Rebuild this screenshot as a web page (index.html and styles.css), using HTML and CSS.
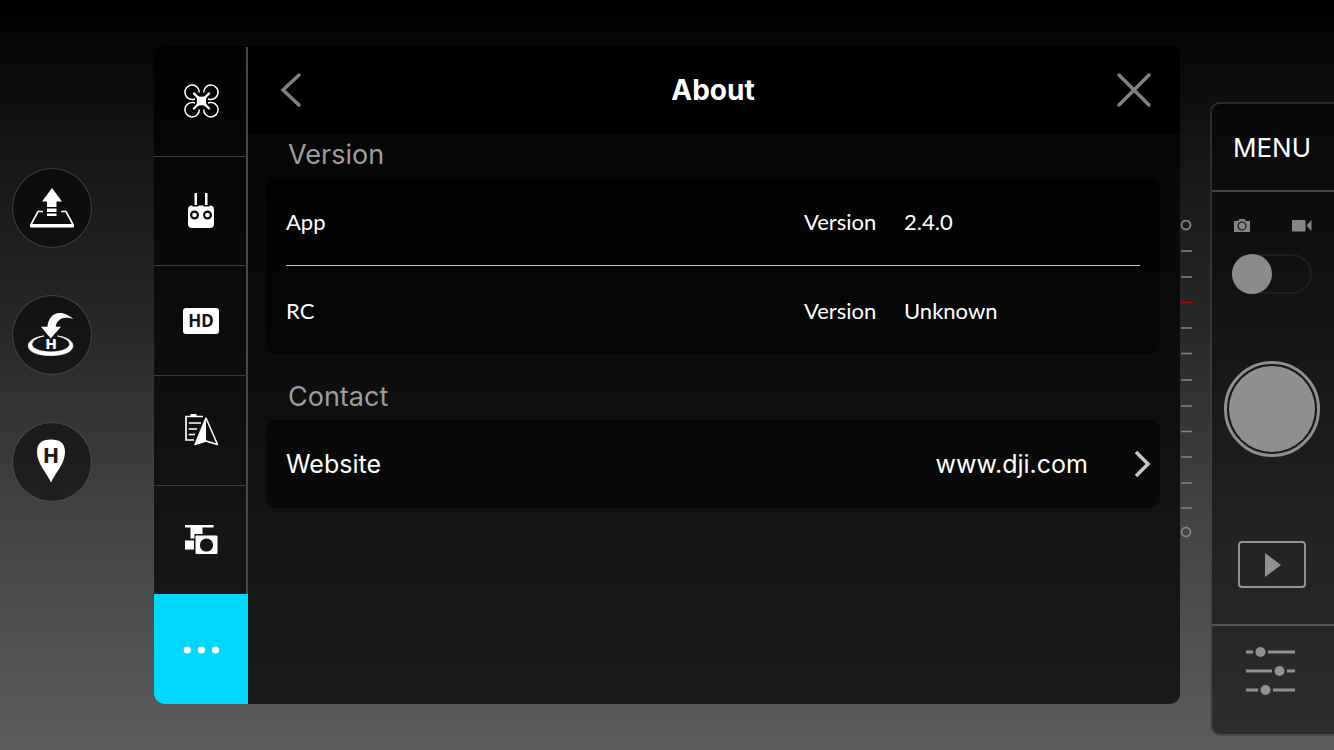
FILE: index.html
```html
<!DOCTYPE html>
<html lang="en">
<head>
    <meta charset="utf-8">
    <title>About</title>
    <link rel="stylesheet" href="styles.css">
</head>
<body>
    <div class="screen">
        <div class="flight-actions">
            <button class="round-button" aria-label="Take off">
                <svg width="78" height="78" viewBox="1 1 78 78">
                    <path d="M40 20L50 33.5H44.500V39H35V33.500H30Z" fill="#fff"/>
                    <path d="M35 40.500h9.500v3.500h-9.500zM35 45.500h9.500v2.500h-9.500z" fill="#fff"/>
                    <path d="M31 43.500H26L19 56.500M49 43.500H54L61 56.500" fill="none" stroke="#fff" stroke-width="1.600"/>
                    <path d="M18 56H62V58.500Q62 59.500 61 59.500H19Q18 59.500 18 58.500Z" fill="#fff"/>
                </svg>
            </button>
            <button class="round-button" aria-label="Return to home">
                <svg width="78" height="78" viewBox="1 1 78 78">
                    <path d="M29 31.700H35.500C36 22 45 11 61.500 24C52 20.500 44.500 24 43.700 31.700H49L38.700 43.500Z" fill="#fff"/>
                    <path d="M32 41C11 43 9 60.500 39 60.500C68 60.500 66 43 45.500 41C64 45 61 56.500 39 57C16 56.500 14 45 32 41Z" fill="#fff" stroke="#fff" stroke-width="0.800"/>
                    <text class="pad-letter" x="39" y="54" text-anchor="middle">H</text>
                </svg>
            </button>
            <button class="round-button" aria-label="Home point">
                <svg width="78" height="78" viewBox="1 1 78 78">
                    <path d="M39 60.500C35 51 25 42 25 30C25 21 30 17.500 39 17.500S53 21 53 30C53 42 43 51 39 60.500Z" fill="#fff"/>
                    <text class="pin-letter" x="39" y="41" text-anchor="middle">H</text>
                </svg>
            </button>
        </div>

        <main class="dialog">
            <nav class="tabs">
                <button class="tab" aria-label="Aircraft">
                    <svg width="40" height="40" viewBox="0 0 40 40">
                        <g fill="none" stroke="#fff" stroke-width="1.500">
                            <path d="M18.300 11.500A7.200 7.200 0 1 0 12 18.400L14 18"/>
                            <path d="M22.700 11.500A7.200 7.200 0 1 1 29 18.400L27 18"/>
                            <path d="M18.300 28.500A7.200 7.200 0 1 1 12 21.600L14 22"/>
                            <path d="M22.700 28.500A7.200 7.200 0 1 0 29 21.600L27 22"/>
                            <path d="M13 12.500L28 27.500M28 12.500L13 27.500" stroke-width="2.400" stroke-linecap="round"/>
                        </g>
                        <path d="M15 14.500Q20.500 17 26 14.500Q24 20 26 25.500Q20.500 23 15 25.500Q17 20 15 14.500Z" fill="#fff"/>
                    </svg>
                </button>
                <button class="tab" aria-label="Remote controller">
                    <svg width="40" height="40" viewBox="0 0 40 40">
                        <path d="M13.500 2h2.500v12h-2.500zM24 2h2.500v12h-2.500z" fill="#fff"/>
                        <rect x="7" y="14.500" width="26" height="22.500" rx="4" fill="#fff"/>
                        <path d="M11.500 14h6v1.500h-6zM22.500 14h6v1.500h-6z" fill="#070707"/>
                        <circle cx="13.500" cy="24" r="3.400" fill="#fff" stroke="#0b0b0b" stroke-width="2.200"/>
                        <circle cx="26.500" cy="24" r="3.400" fill="#fff" stroke="#0b0b0b" stroke-width="2.200"/>
                    </svg>
                </button>
                <button class="tab" aria-label="HD transmission">
                    <span class="hd">HD</span>
                </button>
                <button class="tab" aria-label="Checklist">
                    <svg width="40" height="40" viewBox="0 0 40 40">
                        <path d="M22 6.500H5V30H13M7.700 13H20M7.700 19H16M7.700 24.500H14" fill="none" stroke="#fff" stroke-width="1.700"/>
                        <path d="M9.500 4h6v3h-6z" fill="#fff"/>
                        <path d="M25 8L14 34.500L25 31Z" fill="#fff"/>
                        <path d="M25 8L36.500 34.500L25 31L14 34.500Z" fill="none" stroke="#fff" stroke-width="1.500" stroke-linejoin="round"/>
                    </svg>
                </button>
                <button class="tab" aria-label="Gimbal">
                    <svg width="40" height="40" viewBox="0 0 40 40">
                        <path d="M4 5h28.500v2.500H21.500V14H13.500V18.500H9.500V7.500H4zM4 20.500h9v9H4z" fill="#fff"/>
                        <rect x="14.500" y="15.500" width="22" height="18.500" rx="1" fill="#fff"/>
                        <circle cx="25.500" cy="25" r="6.600" fill="#161616"/>
                    </svg>
                </button>
                <button class="tab active" aria-label="General">
                    <svg width="40" height="40" viewBox="0 0 40 40" fill="#fff">
                        <circle cx="6.300" cy="20" r="3.600"/>
                        <circle cx="20.500" cy="20" r="3.600"/>
                        <circle cx="34.500" cy="20" r="3.600"/>
                    </svg>
                </button>
            </nav>

            <div class="content">
                <header class="title-bar">
                    <button class="icon-button" aria-label="Back">
                        <svg width="40" height="40" viewBox="0 0 40 40"><path d="M23 5L7 20L23 35" fill="none" stroke="#808080" stroke-width="3.500" stroke-linecap="round"/></svg>
                    </button>
                    <h1>About</h1>
                    <button class="icon-button" aria-label="Close">
                        <svg width="40" height="40" viewBox="0 0 40 40"><path d="M5 5L35 35M35 5L5 35" fill="none" stroke="#808080" stroke-width="3.500" stroke-linecap="round"/></svg>
                    </button>
                </header>

                <section class="group">
                    <h2>Version</h2>
                    <div class="card">
                        <table class="versions">
                            <tr>
                                <th scope="row">App</th>
                                <td class="label">Version</td>
                                <td class="value">2.4.0</td>
                            </tr>
                            <tr>
                                <th scope="row">RC</th>
                                <td class="label">Version</td>
                                <td class="value">Unknown</td>
                            </tr>
                        </table>
                    </div>
                </section>

                <section class="group contact">
                    <h2>Contact</h2>
                    <a class="card link-row" href="#">
                        <span>Website</span>
                        <span class="url">www.dji.com</span>
                        <svg width="18" height="28" viewBox="0 0 18 28"><path d="M2 2L14 14L2 26" fill="none" stroke="#c8c8cc" stroke-width="3.500"/></svg>
                    </a>
                </section>
            </div>
        </main>

        <aside class="camera">
            <!-- gimbal pitch scale -->
            <svg class="scale" width="14" height="318" viewBox="0 0 14 318" fill="none" stroke="#858585" stroke-width="1.500">
                <circle cx="6" cy="5" r="4.500" stroke-width="1.800"/>
                <path d="M1 31H12M1 57H12M1 108H12M1 133.500H12M1 160H12M1 186H12M1 211.500H12M1 237H12M1 263H12M1 288H12"/>
                <path d="M0 82.500H13" stroke="#a30d0d"/>
                <circle cx="6" cy="312" r="4.500" stroke-width="1.800"/>
            </svg>

            <div class="camera-panel">
                <button class="menu-button">MENU</button>
                <div class="capture">
                    <label class="mode-icons" for="mode">
                        <svg width="20" height="16" viewBox="0 0 20 16" role="img" aria-label="Photo">
                            <path d="M2 3H6L7.500 1H12.500L14 3H18V14H2Z" fill="#858585"/>
                            <circle cx="10" cy="8" r="4" fill="#858585" stroke="#111" stroke-width="1.200"/>
                        </svg>
                        <svg width="20" height="16" viewBox="0 0 20 16" role="img" aria-label="Video">
                            <rect y="2" width="13.500" height="11.500" rx="1" fill="#858585"/>
                            <path d="M14.500 7.500L19.500 2V13Z" fill="#858585"/>
                        </svg>
                    </label>
                    <input type="checkbox" class="mode-switch" id="mode">
                    <button class="shutter" aria-label="Take photo"></button>
                    <button class="playback" aria-label="Playback">
                        <svg width="18" height="24" viewBox="0 0 18 24"><path d="M2 0L18 12L2 24Z" fill="#919191"/></svg>
                    </button>
                </div>
                <button class="camera-settings" aria-label="Camera settings">
                    <svg width="50" height="50" viewBox="0 0 50 50" fill="#919191" stroke="#919191" stroke-width="2.800">
                        <path d="M1 6H8M23 6H50M1 25H27M42 25H50M1 44H13M28 44H50"/>
                        <g stroke="none">
                            <circle cx="15.500" cy="6" r="5"/>
                            <circle cx="34.500" cy="25" r="5"/>
                            <circle cx="20.500" cy="44" r="5"/>
                        </g>
                    </svg>
                </button>
            </div>
        </aside>
    </div>
</body>
</html>
```
FILE: styles.css
```css
* {
    box-sizing: border-box;
}
body {
    margin: 0;
    font-family: Inter, "Liberation Sans", sans-serif;
    color: white;
    background-color: black;
}
button {
    padding: 0;
    border: none;
    background: none;
    color: inherit;
    font-family: inherit;
    cursor: pointer;
}
svg {
    display: block;
}
.screen {
    display: grid;
    grid-template-columns: 154px 1fr 154px;
    min-height: 100vh;
    background: linear-gradient(#000 0%, #151515 20%, #272727 43%, #404141 67%, #5d5d5d 100%);
}

/* left side buttons */
.flight-actions {
    display: flex;
    flex-direction: column;
    gap: 47px;
    padding: 168px 0 0 12px;
}
.round-button {
    width: 80px;
    height: 80px;
    border: 1px solid rgba(255, 255, 255, 0.2);
    border-radius: 50%;
    background-color: rgba(0, 0, 0, 0.5);
}
.pad-letter {
    font: bold 14px "DejaVu Sans", sans-serif;
    fill: white;
}
.pin-letter {
    font: 800 20px Inter, sans-serif;
    fill: #1c1c1c;
}

/* settings dialog */
.dialog {
    display: flex;
    margin: 46px 0;
    border-radius: 10px;
    overflow: hidden;
    background-color: rgba(0, 0, 0, 0.7);
}
.tabs {
    display: flex;
    flex-direction: column;
    width: 94px;
}
.tab {
    flex: 1;
    display: flex;
    align-items: center;
    justify-content: center;
    border-top: 1px solid #3c3c3c;
    box-shadow: inset -2px 0 #474747;
}
.tab:first-child {
    border-top-color: transparent;
}
.tab.active {
    border-top-color: #00d8ff;
    box-shadow: none;
    background-color: #00d8ff;
}
.hd {
    width: 36px;
    border-radius: 3px;
    background-color: white;
    color: #111;
    font-family: "Noto Sans", sans-serif;
    font-size: 17px;
    font-weight: 700;
    line-height: 26px;
}
.content {
    flex: 1;
}
.title-bar {
    display: flex;
    align-items: center;
    justify-content: space-between;
    height: 88px;
    padding: 0 26px 0 28px;
    background-color: black;
}
h1 {
    margin: 0;
    padding-right: 4px;
    font-size: 28px;
    font-weight: 700;
}
.group {
    padding: 0 20px 0 18px;
}
.contact {
    padding-top: 22px;
}
h2 {
    margin: 0;
    padding: 0 22px 2px;
    color: #9d9d9d;
    font-size: 27px;
    font-weight: 400;
    line-height: 42px;
}
.card {
    border-radius: 10px;
    background-color: rgba(0, 0, 0, 0.5);
}
.versions {
    width: 100%;
    padding: 0 20px;
    border-spacing: 0;
    font-family: Lato, sans-serif;
    font-size: 22px;
}
.versions th,
.versions td {
    height: 88px;
    padding: 0;
    text-align: left;
    font-weight: 400;
}
.versions tr:first-child > * {
    border-bottom: 1px solid #c8c8c8;
}
.versions .label {
    width: 100px;
}
.versions .value {
    width: 236px;
}
.link-row {
    display: flex;
    align-items: center;
    height: 88px;
    padding: 0 8px 0 20px;
    color: white;
    font-size: 25px;
    text-decoration: none;
}
.url {
    margin: 0 46px 0 auto;
}

/* right side camera controls */
.camera {
    display: flex;
    justify-content: space-between;
}
.scale {
    margin-top: 220px;
}
.camera-panel {
    display: flex;
    flex-direction: column;
    width: 124px;
    margin: 102px 0 14px;
    border: 2px solid rgba(255, 255, 255, 0.15);
    border-right: none;
    border-radius: 10px 0 0 10px;
    background-color: rgba(0, 0, 0, 0.5);
}
.menu-button {
    height: 88px;
    padding-right: 2px;
    border-bottom: 2px solid #444;
    font-size: 26px;
}
.capture {
    flex: 1;
    display: flex;
    flex-direction: column;
    align-items: center;
    padding: 26px 2px 0 0;
}
.mode-icons {
    display: flex;
    justify-content: space-between;
    width: 80px;
}
.mode-switch {
    appearance: none;
    width: 80px;
    height: 40px;
    margin: 20px 0 67px;
    border-radius: 20px;
    box-shadow: inset 0 0 0 2px #1e1e1e;
}
.mode-switch::before {
    content: "";
    display: block;
    width: 40px;
    height: 40px;
    border-radius: 50%;
    background-color: #8b8b8b;
}
.mode-switch:checked::before {
    margin-left: 40px;
}
.shutter {
    width: 96px;
    height: 96px;
    margin-bottom: 84px;
    padding: 2px;
    border: 3px solid #8f8f8f;
    border-radius: 50%;
    background: #8f8f8f content-box;
}
.playback {
    display: flex;
    align-items: center;
    justify-content: center;
    width: 68px;
    height: 47px;
    border: 2px solid #919191;
    border-radius: 4px;
}
.camera-settings {
    display: flex;
    justify-content: center;
    height: 110px;
    padding: 20px 6px 0 0;
    border-top: 2px solid #555;
}
```
